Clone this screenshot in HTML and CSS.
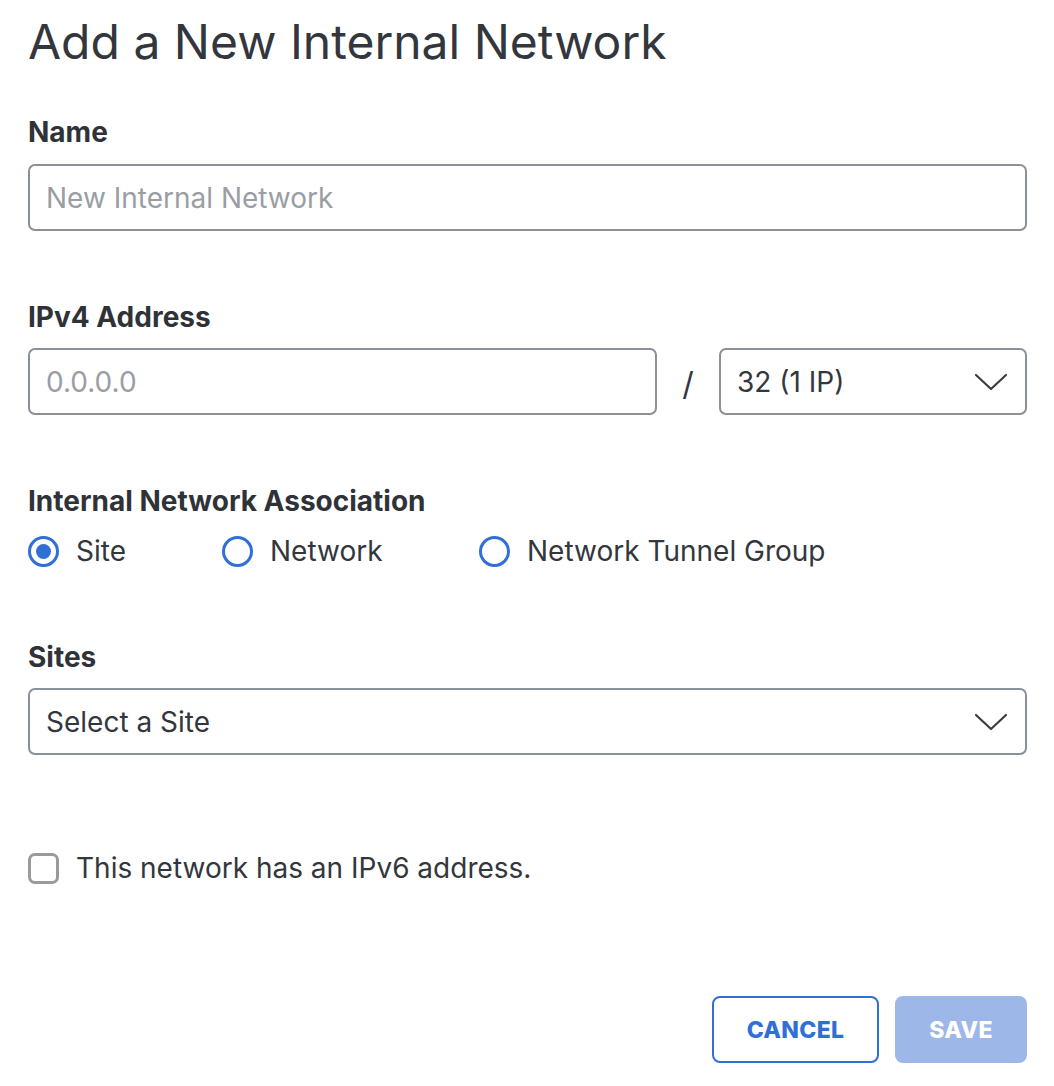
FILE: index.html
```html
<!DOCTYPE html>
<html>
<head>
<meta charset="utf-8">
<link rel="stylesheet" href="styles.css">
</head>
<body>
<main class="form">
  <h1 class="title">Add a New Internal Network</h1>

  <section class="field field-name">
    <label class="label">Name</label>
    <div class="input"><span class="placeholder">New Internal Network</span></div>
  </section>

  <section class="field field-ip">
    <label class="label">IPv4 Address</label>
    <div class="ip-row">
      <div class="input ip-input"><span class="placeholder">0.0.0.0</span></div>
      <span class="slash">/</span>
      <div class="input select cidr">
        <span class="value">32 (1 IP)</span>
        <svg class="chevron" width="34" height="18" viewBox="0 0 34 18"><path d="M2 2 L17 16 L32 2" fill="none" stroke="#3a3e44" stroke-width="2.2" stroke-linecap="round" stroke-linejoin="round"/></svg>
      </div>
    </div>
  </section>

  <section class="field field-assoc">
    <label class="label">Internal Network Association</label>
    <div class="radios">
      <div class="radio-item r-site"><span class="radio checked"></span><span class="radio-text">Site</span></div>
      <div class="radio-item r-net"><span class="radio"></span><span class="radio-text">Network</span></div>
      <div class="radio-item r-tun"><span class="radio"></span><span class="radio-text">Network Tunnel Group</span></div>
    </div>
  </section>

  <section class="field field-sites">
    <label class="label">Sites</label>
    <div class="input select">
      <span class="value">Select a Site</span>
      <svg class="chevron" width="34" height="18" viewBox="0 0 34 18"><path d="M2 2 L17 16 L32 2" fill="none" stroke="#3a3e44" stroke-width="2.2" stroke-linecap="round" stroke-linejoin="round"/></svg>
    </div>
  </section>

  <div class="check-row">
    <span class="checkbox"></span>
    <span class="check-text">This network has an IPv6 address.</span>
  </div>

  <div class="actions">
    <button class="btn btn-cancel">CANCEL</button>
    <button class="btn btn-save">SAVE</button>
  </div>
</main>
</body>
</html>
```

FILE: styles.css
```css
* { box-sizing: border-box; }
html, body { margin: 0; padding: 0; background: #fff; }
body {
  font-family: Inter, "Noto Sans", "Liberation Sans", sans-serif;
  color: #33373d;
}
.form {
  width: 1054px;
  padding: 12px 27px 0 28px;
  display: flex;
  flex-direction: column;
}
.title {
  margin: 0;
  font-size: 48px;
  font-weight: 400;
  line-height: 60px;
  color: #33373d;
}
.field { display: flex; flex-direction: column; }
.label {
  font-size: 28px;
  font-weight: 700;
  line-height: 34px;
  color: #2f3338;
}
.field-name { margin-top: 43px; }
.field-name .label { margin-bottom: 15px; }
.field-ip { margin-top: 69px; }
.field-ip .label { margin-bottom: 14px; }
.field-assoc { margin-top: 69px; }
.field-sites { margin-top: 72px; }
.field-sites .label { margin-bottom: 14px; }

.input {
  height: 67px;
  border: 2px solid #8a9199;
  border-radius: 7px;
  display: flex;
  align-items: center;
  padding: 0 16px;
  font-size: 28px;
  color: #33373d;
}
.placeholder { color: #9a9ea4; }
.ip-row { display: flex; align-items: center; }
.ip-input { width: 629px; }
.slash {
  width: 62px;
  text-align: center;
  font-size: 32px;
  color: #33373d;
  padding-top: 4px;
}
.cidr { flex: 1; }
.select { justify-content: space-between; padding-right: 17px; }
.chevron { display: block; }

.radios { display: flex; margin-top: 16px; align-items: center; }
.radio-item { display: flex; align-items: center; }
.r-site { width: 194px; }
.r-net { width: 257px; }
.radio {
  width: 31px; height: 31px;
  border: 3.5px solid #2f6fd6;
  border-radius: 50%;
  display: inline-flex;
  align-items: center;
  justify-content: center;
  margin-right: 17px;
}
.radio.checked::after {
  content: "";
  width: 15px; height: 15px;
  border-radius: 50%;
  background: #2f6fd6;
}
.radio-text { font-size: 28px; line-height: 34px; color: #33373d; }

.check-row { display: flex; align-items: center; margin-top: 96px; }
.checkbox {
  width: 31px; height: 31px;
  border: 3px solid #9a9a9a;
  border-radius: 7px;
  margin-right: 17px;
}
.check-text { font-size: 28px; line-height: 34px; color: #33373d; }

.actions {
  display: flex;
  justify-content: flex-end;
  gap: 16px;
  margin-top: 111px;
}
.btn {
  height: 67px;
  font-family: Inter, "Noto Sans", "Liberation Sans", sans-serif;
  font-size: 23px;
  font-weight: 800;
  letter-spacing: 0.3px;
  border-radius: 8px;
  cursor: pointer;
}
.btn-cancel {
  width: 167px;
  background: #fff;
  border: 2px solid #2f6fd6;
  color: #2f6fd6;
}
.btn-save {
  width: 132px;
  background: #9cb7e8;
  border: none;
  color: #fff;
}
```
